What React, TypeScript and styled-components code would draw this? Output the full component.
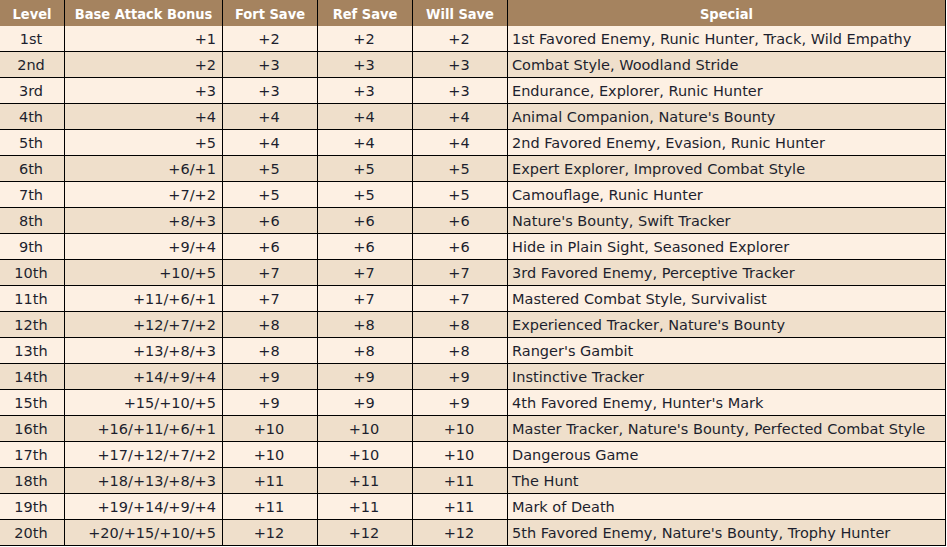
import React from "react";
import styled, { createGlobalStyle } from "styled-components";

const GlobalStyle = createGlobalStyle`
  html, body {
    margin: 0;
    padding: 0;
    background: #ffffff;
  }
`;

type Row = [string, string, string, string, string, string];

const rows: Row[] = [
  ["1st", "+1", "+2", "+2", "+2", "1st Favored Enemy, Runic Hunter, Track, Wild Empathy"],
  ["2nd", "+2", "+3", "+3", "+3", "Combat Style, Woodland Stride"],
  ["3rd", "+3", "+3", "+3", "+3", "Endurance, Explorer, Runic Hunter"],
  ["4th", "+4", "+4", "+4", "+4", "Animal Companion, Nature's Bounty"],
  ["5th", "+5", "+4", "+4", "+4", "2nd Favored Enemy, Evasion, Runic Hunter"],
  ["6th", "+6/+1", "+5", "+5", "+5", "Expert Explorer, Improved Combat Style"],
  ["7th", "+7/+2", "+5", "+5", "+5", "Camouflage, Runic Hunter"],
  ["8th", "+8/+3", "+6", "+6", "+6", "Nature's Bounty, Swift Tracker"],
  ["9th", "+9/+4", "+6", "+6", "+6", "Hide in Plain Sight, Seasoned Explorer"],
  ["10th", "+10/+5", "+7", "+7", "+7", "3rd Favored Enemy, Perceptive Tracker"],
  ["11th", "+11/+6/+1", "+7", "+7", "+7", "Mastered Combat Style, Survivalist"],
  ["12th", "+12/+7/+2", "+8", "+8", "+8", "Experienced Tracker, Nature's Bounty"],
  ["13th", "+13/+8/+3", "+8", "+8", "+8", "Ranger's Gambit"],
  ["14th", "+14/+9/+4", "+9", "+9", "+9", "Instinctive Tracker"],
  ["15th", "+15/+10/+5", "+9", "+9", "+9", "4th Favored Enemy, Hunter's Mark"],
  ["16th", "+16/+11/+6/+1", "+10", "+10", "+10", "Master Tracker, Nature's Bounty, Perfected Combat Style"],
  ["17th", "+17/+12/+7/+2", "+10", "+10", "+10", "Dangerous Game"],
  ["18th", "+18/+13/+8/+3", "+11", "+11", "+11", "The Hunt"],
  ["19th", "+19/+14/+9/+4", "+11", "+11", "+11", "Mark of Death"],
  ["20th", "+20/+15/+10/+5", "+12", "+12", "+12", "5th Favored Enemy, Nature's Bounty, Trophy Hunter"],
];

const headers = ["Level", "Base Attack Bonus", "Fort Save", "Ref Save", "Will Save", "Special"];
const aligns: Array<"center" | "right" | "left"> = ["center", "right", "center", "center", "center", "left"];

const App = () => {
  return (
    <>
      <GlobalStyle />
      <Table>
        {headers.map((h) => (
          <HeadCell key={h}>{h}</HeadCell>
        ))}
        {rows.map((r, ri) =>
          r.map((c, ci) => (
            <Cell key={ri + "-" + ci} $odd={ri % 2 === 1} $align={aligns[ci]}>
              {c}
            </Cell>
          ))
        )}
      </Table>
    </>
  );
};

export default App;

const Table = styled.div`
  display: grid;
  grid-template-columns: 65px 158px 95px 95px 95px 438px;
  grid-auto-rows: 26px;
  width: 946px;
  font-family: "DejaVu Sans", Verdana, sans-serif;
  font-size: 14.5px;
`;

const HeadCell = styled.div`
  height: 27px;
  box-sizing: border-box;
  background-color: #a5835f;
  color: #ffffff;
  font-family: "DejaVu Sans Condensed", "DejaVu Sans", sans-serif;
  font-weight: bold;
  font-size: 14.5px;
  border-right: 1px solid #000000;
  border-bottom: 1px solid #000000;
  display: flex;
  align-items: center;
  justify-content: center;
  padding-top: 1px;
`;

const Cell = styled.div<{ $odd: boolean; $align: "center" | "right" | "left" }>`
  box-sizing: border-box;
  background-color: ${(p) => (p.$odd ? "#efdfcb" : "#fdf0e3")};
  color: #1d1f2e;
  border-right: 1px solid #000000;
  border-bottom: 1px solid #000000;
  display: flex;
  align-items: center;
  justify-content: ${(p) =>
    p.$align === "center" ? "center" : p.$align === "right" ? "flex-end" : "flex-start"};
  padding: 1px 6px 0 4px;
  white-space: nowrap;
`;
